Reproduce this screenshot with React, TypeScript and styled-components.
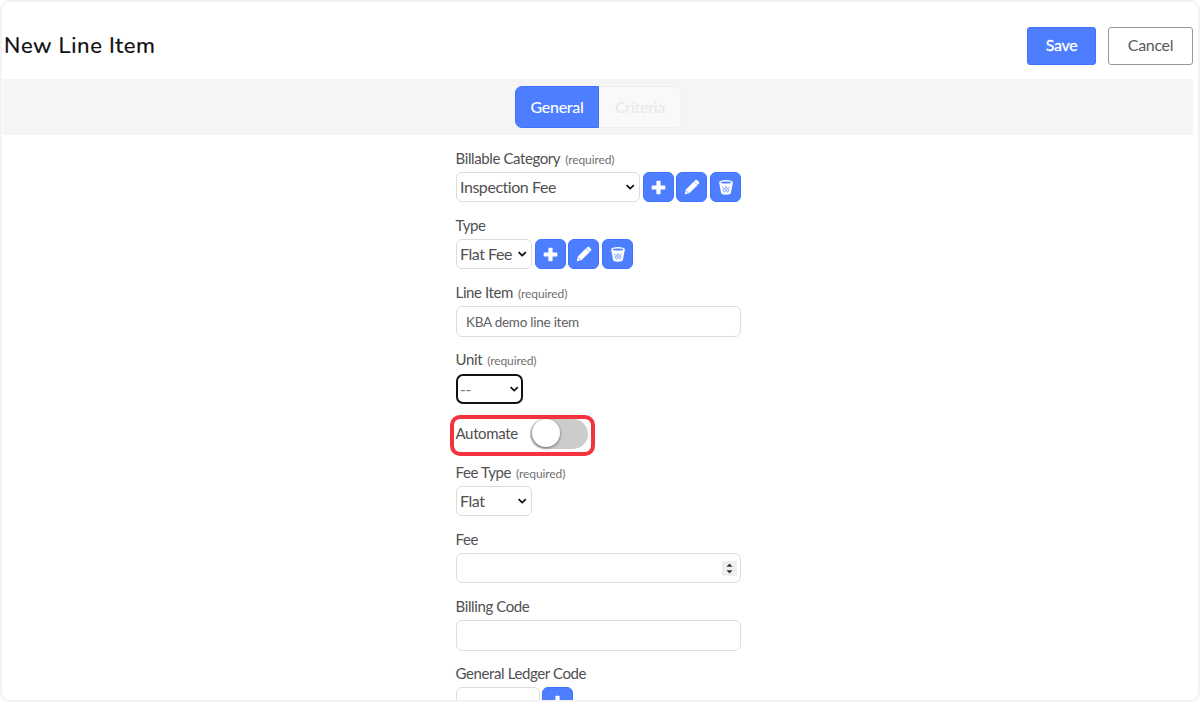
import React from 'react';
import styled, { createGlobalStyle } from 'styled-components';

const GlobalStyle = createGlobalStyle`
  *, *::before, *::after { box-sizing: border-box; }
  body { margin: 0; background: #fff; font-family: Lato, "Liberation Sans", sans-serif; color: #505050; }
  svg { display: block; }
`;

const Frame = styled.div`
  width: 1200px;
  height: 702px;
  overflow: hidden;
  border: 2px solid #f2f2f8;
  border-radius: 10px;
  background: #fff;
`;

const Header = styled.header`
  display: flex;
  align-items: flex-start;
  height: 77px;
  padding: 25px 5px 0 2px;
`;

const Title = styled.h1`
  flex: 1;
  margin: 0;
  padding-top: 4px;
  font-family: Nunito, Lato, sans-serif;
  font-size: 22px;
  font-weight: 500;
  line-height: 30px;
  letter-spacing: 0.6px;
  color: #111;
  -webkit-text-stroke: 0.15px #111;
`;

const ActionButton = styled.button<{ $primary?: boolean; $width: number }>`
  width: ${(p) => p.$width}px;
  height: 38px;
  margin: 0 0 0 12px;
  padding: 0 0 2px;
  border: 1px solid ${(p) => (p.$primary ? '#3f73ff' : '#999')};
  border-radius: 3px;
  background: ${(p) => (p.$primary ? '#4d7eff' : '#fff')};
  color: ${(p) => (p.$primary ? '#fff' : '#5a5a5a')};
  font: 400 16px/34px Lato, sans-serif;
  letter-spacing: -0.3px;
  -webkit-text-stroke: ${(p) => (p.$primary ? 0.3 : 0)}px #fff;
`;

const TabBar = styled.nav`
  display: flex;
  justify-content: center;
  height: 56px;
  margin: 0 5px 0 1px;
  padding: 7px 0 0 1px;
  background: #f5f5f5;
`;

const Tab = styled.div<{ $active?: boolean }>`
  width: ${(p) => (p.$active ? 84 : 83)}px;
  height: 42px;
  border: 1px solid ${(p) => (p.$active ? '#3f73ff' : '#eee')};
  border-left-width: ${(p) => (p.$active ? 1 : 0)}px;
  border-radius: ${(p) => (p.$active ? '7px 0 0 7px' : '0 7px 7px 0')};
  background: ${(p) => (p.$active ? '#4d7eff' : '#f9f9f9')};
  color: ${(p) => (p.$active ? '#fff' : '#e9e9e9')};
  font-size: 16px;
  font-weight: 500;
  line-height: 40px;
  letter-spacing: -0.3px;
  text-align: center;
`;

const Form = styled.form`
  width: 286px;
  margin: 0 0 0 454px;
  padding-top: 13px;
`;

const Field = styled.div`
  height: 67px;
`;

const Label = styled.div<{ $gap?: number }>`
  height: 20px;
  margin-bottom: ${(p) => p.$gap ?? 4}px;
  font-size: 15px;
  line-height: 20px;
  letter-spacing: -0.4px;
  text-indent: -0.4px;
  white-space: nowrap;
`;

const Required = styled.span`
  margin-left: 5px;
  font-size: 12px;
  letter-spacing: -0.1px;
  color: #707070;
`;

const Controls = styled.div`
  display: flex;
  gap: 2.7px;
`;

const SelectBox = styled.div<{ $width: number; $focused?: boolean }>`
  display: flex;
  flex: none;
  align-items: center;
  justify-content: space-between;
  width: ${(p) => p.$width}px;
  height: 30px;
  padding: 0 ${(p) => (p.$focused ? 2 : 4)}px 0 ${(p) => (p.$focused ? 2 : 3)}px;
  border: ${(p) => (p.$focused ? '2px solid #111' : '1px solid #ddd')};
  border-radius: ${(p) => (p.$focused ? 7 : 6)}px;
  font-size: 16px;
  line-height: 26px;
  letter-spacing: -0.45px;
  white-space: nowrap;
  color: ${(p) => (p.$focused ? '#777' : 'inherit')};
`;

const InputBox = styled.div<{ $height?: number }>`
  display: flex;
  align-items: center;
  width: 285px;
  height: ${(p) => p.$height ?? 30}px;
  padding: 0 3px 0 9px;
  border: 1px solid #ddd;
  border-radius: 6px;
  font-size: 13.5px;
  letter-spacing: -0.25px;
  color: #606060;
`;

const Spinner = styled.div`
  display: grid;
  place-items: center;
  width: 15px;
  height: 15px;
  margin-left: auto;
  background: #efefef;
`;

const IconButton = styled.button`
  display: grid;
  flex: none;
  place-items: center;
  width: 31px;
  height: 30px;
  padding: 0;
  border: 1px solid #3f73ff;
  border-radius: 6px;
  background: #4d7eff;
`;

const AutomateRow = styled.div`
  display: flex;
  align-items: flex-start;
  width: 145px;
  height: 41px;
  margin: -1px 0 6px -6px;
  padding: 0 3px 0 1.5px;
  border: 4px solid #f5333f;
  border-radius: 10px;
  font-size: 15px;
  line-height: 20px;
  letter-spacing: -0.35px;
`;

const AutomateText = styled.span`
  padding-top: 4px;
`;

const Switch = styled.div`
  width: 58px;
  height: 30px;
  margin-left: auto;
  padding: 0 2px;
  border-radius: 15px;
  background: #ccc;
`;

const Knob = styled.div`
  width: 28px;
  height: 28px;
  border-radius: 50%;
  background: #fff;
  box-shadow: 0 1px 3px rgba(0, 0, 0, 0.5);
`;

const Chevron = ({ color = '#111' }: { color?: string }) => (
  <svg width="10" height="8" viewBox="0 0 10 8" fill="none" stroke={color} strokeWidth="1.8">
    <path d="M1.6 2.2 5.2 5.6 8.8 2.2" />
  </svg>
);

const PlusIcon = () => (
  <svg width="15" height="15" viewBox="0 0 15 15" fill="#fff">
    <path d="M6.1.7h2.8q.7 0 .7.7v4h4q.7 0 .7.7v2.8q0 .7-.7.7h-4v4q0 .7-.7.7H6.1q-.7 0-.7-.7v-4h-4q-.7 0-.7-.7V6.1q0-.7.7-.7h4v-4q0-.7.7-.7z" />
  </svg>
);

const PencilIcon = () => (
  <svg width="16" height="16" viewBox="0 0 16 16">
    <path fill="#fff" d="M.8 15.2 1.9 10.4 9.8 2.5l3.7 3.7-7.9 7.9zM10.1 2.2l1.4-1.2q.8-.7 1.6 0l1.9 1.9q.7.8 0 1.6l-1.2 1.4z" />
    <path fill="none" stroke="#4d7eff" strokeWidth=".7" d="m2.4 11.9 1.9 1.9" />
  </svg>
);

const BasketIcon = () => (
  <svg width="16" height="17" viewBox="0 0 16 17" fill="none">
    <path d="M1.2 3.7 3 13.6q.2 2.2 5 2.2t5-2.2l1.8-9.9z" fill="#fff" />
    <ellipse cx="8" cy="3.6" rx="6.9" ry="2.6" fill="#fff" />
    <ellipse cx="8" cy="3.6" rx="5.2" ry="1" fill="#4d7eff" />
    <path d="m4 7.6 5.8 5.6M7.1 7.6l4.2 3.8M4.7 11.2l1.9 1.7M12 7.6l-5.8 5.6M8.9 7.6l-4.2 3.8M11.3 11.2l-1.9 1.7" stroke="#4d7eff" strokeWidth=".7" />
  </svg>
);

const EditButtons = () => (
  <>
    <IconButton type="button" aria-label="Add"><PlusIcon /></IconButton>
    <IconButton type="button" aria-label="Edit"><PencilIcon /></IconButton>
    <IconButton type="button" aria-label="Delete"><BasketIcon /></IconButton>
  </>
);

export default function App() {
  return (
    <Frame>
      <GlobalStyle />
      <Header>
        <Title>New Line Item</Title>
        <ActionButton $primary $width={69}>Save</ActionButton>
        <ActionButton $width={85}>Cancel</ActionButton>
      </Header>
      <TabBar>
        <Tab $active>General</Tab>
        <Tab>Criteria</Tab>
      </TabBar>
      <Form>
        <Field>
          <Label>Billable Category<Required>(required)</Required></Label>
          <Controls>
            <SelectBox $width={184}>Inspection Fee<Chevron /></SelectBox>
            <EditButtons />
          </Controls>
        </Field>
        <Field>
          <Label>Type</Label>
          <Controls>
            <SelectBox $width={76}>Flat Fee<Chevron /></SelectBox>
            <EditButtons />
          </Controls>
        </Field>
        <Field>
          <Label>Line Item<Required>(required)</Required></Label>
          <InputBox $height={31}>KBA demo line item</InputBox>
        </Field>
        <Field>
          <Label $gap={5}>Unit<Required>(required)</Required></Label>
          <SelectBox $width={67} $focused>--<Chevron /></SelectBox>
        </Field>
        <AutomateRow>
          <AutomateText>Automate</AutomateText>
          <Switch><Knob /></Switch>
        </AutomateRow>
        <Field>
          <Label>Fee Type<Required>(required)</Required></Label>
          <SelectBox $width={76}>Flat<Chevron /></SelectBox>
        </Field>
        <Field>
          <Label>Fee</Label>
          <InputBox>
            <Spinner>
              <svg width="7" height="11" viewBox="0 0 7 11" fill="#333">
                <path d="M.5 3.7 3.5.5l3 3.2zM.5 7.3l3 3.2 3-3.2z" />
              </svg>
            </Spinner>
          </InputBox>
        </Field>
        <Field>
          <Label>Billing Code</Label>
          <InputBox $height={31} />
        </Field>
        <Field>
          <Label>General Ledger Code</Label>
          <Controls>
            <SelectBox $width={83.5}><span /><Chevron color="#bbb" /></SelectBox>
            <IconButton type="button" aria-label="Add"><PlusIcon /></IconButton>
          </Controls>
        </Field>
      </Form>
    </Frame>
  );
}
